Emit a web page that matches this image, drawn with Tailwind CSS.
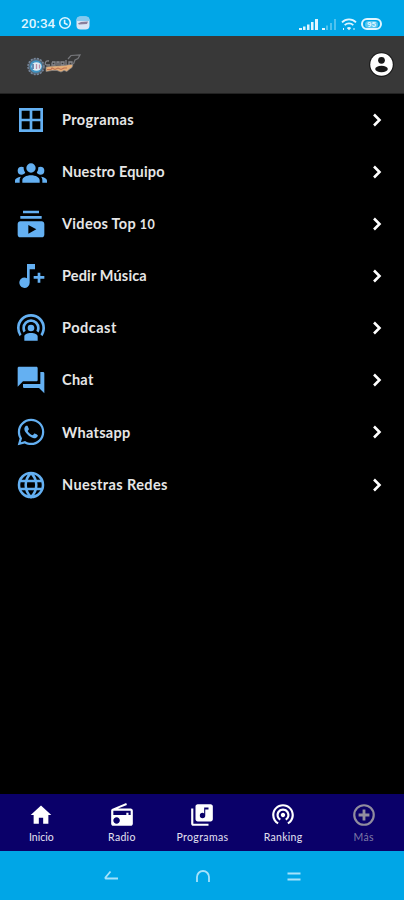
<!DOCTYPE html>
<html lang="es">
<head>
  <meta charset="UTF-8" />
  <meta name="viewport" content="width=device-width, initial-scale=1.0" />
  <title>Más</title>
  <script src="https://cdn.jsdelivr.net/npm/@tailwindcss/browser@4"></script>
</head>
<body class="flex flex-col h-screen overflow-hidden bg-black text-white font-['Lato',sans-serif]">

  <!-- barra de estado -->
  <div class="flex h-9 shrink-0 items-end justify-between bg-[#00a6e7] pb-[5px] pl-[21px] pr-[22px] text-[#dff5ff]">
    <div class="flex items-center">
      <span class="w-[36px] font-['Roboto',sans-serif] text-[13.5px] leading-4 font-medium">20:34</span>
      <svg class="ml-[1px] size-[14px]" viewBox="0 0 14 14" fill="none" stroke="currentColor" stroke-width="1.6"><circle cx="7" cy="7" r="5.3"/><path d="M6.6 3.8V7.3l3 1.5"/></svg>
      <svg class="ml-1 size-[14px]" viewBox="0 0 14 14"><rect x=".5" y=".5" width="13" height="13" rx="4" fill="#d9e6f5"/><path d="M.5 5V4.5a4 4 0 0 1 4-4h5a4 4 0 0 1 4 4V5z" fill="#86c9ee"/><path d="M2 7.5 5 6l7-.5-1 2.5-8 .5z" fill="#8a7f9b"/></svg>
    </div>
    <div class="flex items-center">
      <svg class="h-[14px] w-[38px]" viewBox="0 0 38 14" fill="currentColor"><path d="M0 11h3v2H0zM4 9.5h2.5V13H4zM8 7.5h2.5V13H8zM12 5h2.5v8H12zM16 2h3v11h-3z"/><path d="M23 11h3v2h-3z"/><path opacity=".35" d="M27 8.5h2V13h-2zM31 6h2v7h-2zM35 2h2v11h-2z"/></svg>
      <svg class="ml-1 h-[14px] w-4" viewBox="0 0 16 14" fill="none" stroke="currentColor" stroke-width="1.8"><path d="M1 5.3a10 10 0 0 1 14 0M3.7 8.2a6.200 6.200 0 0 1 8.600 0"/><path d="M5.8 11 8 13.300 10.200 11a3.200 3.200 0 0 0-4.400 0z" fill="currentColor" stroke="none"/><path d="M2.5 11v2M13 11v2" stroke-width="1"/></svg>
      <div class="ml-1 flex h-3 w-[21px] items-center justify-center rounded-full border-2 border-current">
        <span class="rounded-full bg-white/35 px-0.5 font-['Roboto',sans-serif] text-[8px] leading-[7px] font-bold">95</span>
      </div>
    </div>
  </div>

  <!-- cabecera -->
  <header class="flex h-[58px] shrink-0 items-center justify-between border-b border-[#222] bg-[#383838] pl-[26px] pr-[9px]">
    <svg class="h-[26px] w-14" viewBox="0 0 56 26">
      <circle cx="10" cy="14.500" r="8" fill="#57626f" stroke="#76869a" stroke-width="1.500" stroke-dasharray="2 1.200"/>
      <circle cx="10" cy="14.500" r="6.300" fill="#3f94c4"/>
      <ellipse cx="10.500" cy="14.500" rx="5" ry="4.200" fill="#dfeaf2"/>
      <path d="M7 12v5" stroke="#3b6ea0" stroke-width="1.500"/>
      <path d="M10.500 12v5M13.500 12.500v4" stroke="#b98fa8" stroke-width="1.300"/>
      <path d="M23 9c-4-1-5 4-2 4h3M26 10.500v2.500h3v-3h-3M31 13v-3h2v3M35 13v-3h3v3h-3M40 8v5M43 13v-3h3v2.500" fill="none" stroke="#85868b" stroke-width="1.300"/>
      <path d="m42 7 3-3.500 9-.5-2 3.500-3 1.500-1.500 4" fill="none" stroke="#77787c" stroke-width="1.200"/>
      <path d="M20 15c6-1.500 12-1 17-1.500 4-.3 7-1.500 10-1l-1 3-3 2-2 2-3-1-3 1.500-4-1.500-5 0-6 1z" fill="#e3ae78" stroke="#85858a" stroke-width=".7"/>
      <path d="M21 17.500h4l1-1.500 3 1.500 3-1.500 3 1.500 3-1.500h3" fill="none" stroke="#c07050" stroke-width="1.100"/>
    </svg>
    <svg class="size-[27px]" viewBox="0 0 24 24"><circle cx="12" cy="12" r="11" fill="#181818"/><path fill="#fff" d="M12 2a10 10 0 1 0 0 20 10 10 0 0 0 0-20z"/><circle cx="12" cy="8.300" r="3" fill="#181818"/><ellipse cx="12" cy="16" rx="5.600" ry="2.900" fill="#181818"/></svg>
  </header>

  <!-- menu -->
  <main class="flex grow flex-col -mt-[0.5px] text-[14.5px] font-bold text-[#e6e6e6]">
    <a class="flex h-[52.15px] items-center px-[15px]">
      <svg class="size-8 text-[#64b0f2]" viewBox="0 0 24 24" fill="none" stroke="currentColor" stroke-width="2"><path d="M4 4h16v16H4zM12 4v16M4 12h16"/></svg>
      <span class="ml-[15px] grow pt-px tracking-[.4px]">Programas</span>
      <svg class="size-6" viewBox="0 0 24 24" fill="none" stroke="#fff" stroke-width="2.6"><path d="m9 6.500 5.500 5.500L9 17.500"/></svg>
    </a>
    <a class="flex h-[52.15px] items-center px-[15px]">
      <svg class="size-8 text-[#64b0f2]" viewBox="0 0 24 24" fill="currentColor"><path d="M12 5.500A3.500 3.500 0 0 1 15.500 9a3.500 3.500 0 0 1-3.500 3.500A3.500 3.500 0 0 1 8.500 9 3.500 3.500 0 0 1 12 5.500M5 8c.56 0 1.080.15 1.530.42-.15 1.430.27 2.850 1.130 3.960C7.160 13.340 6.160 14 5 14a3 3 0 0 1-3-3 3 3 0 0 1 3-3m14 0a3 3 0 0 1 3 3 3 3 0 0 1-3 3c-1.160 0-2.160-.66-2.660-1.620a5.540 5.540 0 0 0 1.130-3.960c.45-.27.97-.42 1.530-.42M5.500 18.250c0-2.070 2.910-3.750 6.500-3.750s6.500 1.680 6.500 3.750V20h-13zM0 20v-1.500c0-1.390 1.890-2.560 4.450-2.900-.59.68-.95 1.620-.95 2.650V20zm24 0h-3.500v-1.750c0-1.030-.36-1.970-.95-2.650 2.560.34 4.450 1.510 4.450 2.900z"/></svg>
      <span class="ml-[15px] grow pt-px tracking-[.15px]">Nuestro Equipo</span>
      <svg class="size-6" viewBox="0 0 24 24" fill="none" stroke="#fff" stroke-width="2.6"><path d="m9 6.500 5.500 5.500L9 17.500"/></svg>
    </a>
    <a class="flex h-[52.15px] items-center px-[15px]">
      <svg class="size-8 text-[#64b0f2]" viewBox="0 0 24 24" fill="currentColor"><path d="M20 8H4V6h16v2zm-2-6H6v2h12V2zm4 10v8c0 1.100-.9 2-2 2H4c-1.100 0-2-.9-2-2v-8c0-1.100.9-2 2-2h16c1.100 0 2 .9 2 2zm-6 4-6-3.270v6.530L16 16z"/></svg>
      <span class="ml-[15px] grow pt-px tracking-[.3px]">Videos Top <span class="text-[12.5px]">10</span></span>
      <svg class="size-6" viewBox="0 0 24 24" fill="none" stroke="#fff" stroke-width="2.6"><path d="m9 6.500 5.500 5.500L9 17.500"/></svg>
    </a>
    <a class="flex h-[52.15px] items-center px-[15px]">
      <svg class="size-8 text-[#64b0f2]" viewBox="0 0 24 24" fill="currentColor"><path d="M9 3h6v4h-4v10a3.900 3.900 0 1 1-2-3.400zM17 9.500h2V12h3v2h-3v3h-2v-3h-3v-2h3z"/></svg>
      <span class="ml-[15px] grow tracking-[.15px]">Pedir Música</span>
      <svg class="size-6" viewBox="0 0 24 24" fill="none" stroke="#fff" stroke-width="2.6"><path d="m9 6.500 5.500 5.500L9 17.500"/></svg>
    </a>
    <a class="flex h-[52.15px] items-center px-[15px]">
      <svg class="size-8 text-[#64b0f2]" viewBox="0 0 24 24" fill="currentColor"><path d="M17 18.250v3.250H7v-3.250c0-1.380 2.240-2.500 5-2.500s5 1.120 5 2.500M12 5.500a6.500 6.500 0 0 1 6.500 6.500c0 1.250-.35 2.420-.96 3.410L16 14.040c.32-.61.5-1.310.5-2.040 0-2.500-2-4.500-4.500-4.500s-4.500 2-4.500 4.500c0 .73.18 1.430.5 2.040l-1.540 1.370c-.61-.99-.96-2.160-.96-3.410A6.500 6.500 0 0 1 12 5.500m0-4A10.500 10.500 0 0 1 22.500 12c0 2.280-.73 4.390-1.960 6.110l-1.500-1.350c.92-1.360 1.460-3 1.460-4.760A8.500 8.500 0 0 0 12 3.500 8.500 8.500 0 0 0 3.500 12c0 1.760.54 3.400 1.460 4.760l-1.500 1.350A10.470 10.470 0 0 1 1.500 12 10.500 10.500 0 0 1 12 1.500m0 8a2.500 2.500 0 0 1 2.500 2.500 2.500 2.500 0 0 1-2.500 2.500A2.500 2.500 0 0 1 9.500 12 2.500 2.500 0 0 1 12 9.500"/></svg>
      <span class="ml-[15px] grow tracking-[.5px]">Podcast</span>
      <svg class="size-6" viewBox="0 0 24 24" fill="none" stroke="#fff" stroke-width="2.6"><path d="m9 6.500 5.500 5.500L9 17.500"/></svg>
    </a>
    <a class="flex h-[52.15px] items-center px-[15px]">
      <svg class="size-8 text-[#64b0f2]" viewBox="0 0 24 24" fill="currentColor"><path d="M21 6h-2v9H6v2c0 .55.45 1 1 1h11l4 4V7c0-.55-.45-1-1-1zm-4 6V3c0-.55-.45-1-1-1H3c-.55 0-1 .45-1 1v14l4-4h10c.55 0 1-.45 1-1z"/></svg>
      <span class="ml-[15px] grow tracking-[.3px]">Chat</span>
      <svg class="size-6" viewBox="0 0 24 24" fill="none" stroke="#fff" stroke-width="2.6"><path d="m9 6.500 5.500 5.500L9 17.500"/></svg>
    </a>
    <a class="flex h-[52.15px] items-center px-[15px]">
      <svg class="size-8 text-[#64b0f2]" viewBox="0 0 24 24" fill="currentColor"><path d="M12.040 2C6.580 2 2.130 6.450 2.130 11.910c0 1.750.46 3.450 1.320 4.950L2.050 22l5.250-1.380c1.450.79 3.080 1.210 4.740 1.210 5.460 0 9.910-4.450 9.910-9.910 0-2.650-1.030-5.140-2.900-7.010A9.820 9.820 0 0 0 12.040 2m.01 1.670c2.200 0 4.260.86 5.820 2.420a8.230 8.230 0 0 1 2.410 5.830c0 4.540-3.700 8.230-8.240 8.230-1.480 0-2.930-.39-4.190-1.150l-.3-.17-3.120.82.83-3.040-.2-.32a8.190 8.190 0 0 1-1.260-4.380c.01-4.540 3.700-8.240 8.250-8.240M8.530 7.330c-.16 0-.43.06-.66.31-.22.25-.87.86-.87 2.070 0 1.220.89 2.390 1 2.560.14.17 1.760 2.670 4.250 3.730.59.27 1.050.42 1.410.53.59.19 1.130.16 1.560.1.48-.07 1.460-.6 1.670-1.180s.21-1.070.15-1.180c-.07-.1-.23-.16-.48-.27-.25-.14-1.470-.74-1.690-.82-.23-.08-.37-.12-.56.12-.16.25-.64.81-.78.97-.15.17-.29.19-.53.07-.26-.13-1.060-.39-2-1.230-.74-.66-1.230-1.470-1.380-1.720-.12-.24-.01-.39.11-.5.11-.11.27-.29.37-.44.13-.14.17-.25.25-.41.08-.17.04-.31-.02-.43-.06-.11-.56-1.350-.77-1.840-.2-.48-.4-.42-.56-.43-.14 0-.3-.01-.47-.01z"/></svg>
      <span class="ml-[15px] grow tracking-[.3px]">Whatsapp</span>
      <svg class="size-6" viewBox="0 0 24 24" fill="none" stroke="#fff" stroke-width="2.6"><path d="m9 6.500 5.500 5.500L9 17.500"/></svg>
    </a>
    <a class="flex h-[52.15px] items-center px-[15px]">
      <svg class="size-8 text-[#64b0f2]" viewBox="0 0 24 24" fill="none" stroke="currentColor" stroke-width="1.9"><circle cx="12" cy="12" r="9"/><path d="M12 3c-5.300 5-5.300 13 0 18 5.300-5 5.300-13 0-18M4 9h16M4 15h16"/></svg>
      <span class="ml-[15px] grow tracking-[.4px]">Nuestras Redes</span>
      <svg class="size-6" viewBox="0 0 24 24" fill="none" stroke="#fff" stroke-width="2.6"><path d="m9 6.500 5.500 5.500L9 17.500"/></svg>
    </a>
  </main>

  <!-- pestañas -->
  <nav class="grid h-[57px] shrink-0 grid-cols-5 bg-[#0a0069] pl-px pt-2 text-[10.5px] leading-[13px] text-[#e4e2f2]">
    <div class="flex flex-col items-center gap-[3px]">
      <svg class="size-[26px] text-white" viewBox="0 0 24 24" fill="currentColor"><path d="M10 20v-5.500h4V20h4.800v-8H21.500L12 3.300 2.500 12h2.700v8z"/></svg>
      <span>Inicio</span>
    </div>
    <div class="flex flex-col items-center gap-[3px]">
      <svg class="size-[26px] text-white" viewBox="0 0 24 24" fill="currentColor"><path d="M3.240 6.150C2.510 6.430 2 7.170 2 8v12c0 1.100.89 2 2 2h16c1.110 0 2-.9 2-2V8c0-1.110-.89-2-2-2H8.300l8.260-3.340L15.880 1 3.240 6.150zM7 20c-1.660 0-3-1.340-3-3s1.340-3 3-3 3 1.340 3 3-1.340 3-3 3zm13-8h-2v-2h-2v2H4V8h16v4z"/></svg>
      <span class="tracking-[.3px]">Radio</span>
    </div>
    <div class="flex flex-col items-center gap-[3px]">
      <svg class="size-[26px] text-white" viewBox="0 0 24 24" fill="currentColor"><path d="M20 2H8c-1.100 0-2 .9-2 2v12c0 1.100.9 2 2 2h12c1.100 0 2-.9 2-2V4c0-1.100-.9-2-2-2zm-2 5h-3v5.500a2.500 2.500 0 1 1-2.500-2.500c.57 0 1.080.19 1.500.51V5h4v2zM4 6H2v14c0 1.100.9 2 2 2h14v-2H4V6z"/></svg>
      <span class="tracking-[.4px]">Programas</span>
    </div>
    <div class="flex flex-col items-center gap-[3px]">
      <svg class="size-[26px] text-white" viewBox="0 1 24 24" fill="currentColor"><path d="M12 11c-1.100 0-2 .9-2 2s.9 2 2 2 2-.9 2-2-.9-2-2-2zm6 2c0-3.310-2.690-6-6-6s-6 2.690-6 6c0 2.220 1.210 4.150 3 5.190l1-1.740c-1.190-.7-2-1.970-2-3.450 0-2.210 1.790-4 4-4s4 1.790 4 4c0 1.480-.81 2.750-2 3.450l1 1.740c1.790-1.040 3-2.970 3-5.190zM12 3C6.480 3 2 7.480 2 13c0 3.700 2.010 6.920 4.990 8.650l1-1.730C5.610 18.530 4 15.960 4 13c0-4.420 3.580-8 8-8s8 3.580 8 8c0 2.960-1.610 5.530-4 6.920l1 1.730c2.990-1.730 5-4.950 5-8.650 0-5.520-4.480-10-10-10z"/></svg>
      <span class="tracking-[.3px]">Ranking</span>
    </div>
    <div class="flex flex-col items-center gap-[3px] text-[#7f7aa6]">
      <svg class="size-[26px] text-[#918d9f]" viewBox="0 0 24 24" fill="none" stroke="currentColor" stroke-width="2"><circle cx="12" cy="12" r="9"/><path d="M12 7v10M7 12h10" stroke-width="2.6"/></svg>
      <span class="tracking-[.3px]">Más</span>
    </div>
  </nav>

  <!-- botones del sistema -->
  <div class="flex h-[49px] shrink-0 items-center justify-between bg-[#00a6e7] pl-[103px] pr-[102px] text-[#a5e2fb]">
    <svg class="h-4 w-4" viewBox="0 0 16 16" fill="none" stroke="currentColor" stroke-width="1.8"><path d="M7.500 3.500 2.500 9.500Q2 10.500 3.500 10.500H15"/></svg>
    <svg class="h-4 w-4" viewBox="0 0 16 16" fill="none" stroke="currentColor" stroke-width="1.8"><path d="M2 14V9a6 6 0 0 1 12 0v5"/></svg>
    <svg class="h-4 w-4" viewBox="0 0 16 16" fill="none" stroke="currentColor" stroke-width="1.8"><path d="M1.500 5.500h13M1.500 11.500h13"/></svg>
  </div>

</body>
</html>
